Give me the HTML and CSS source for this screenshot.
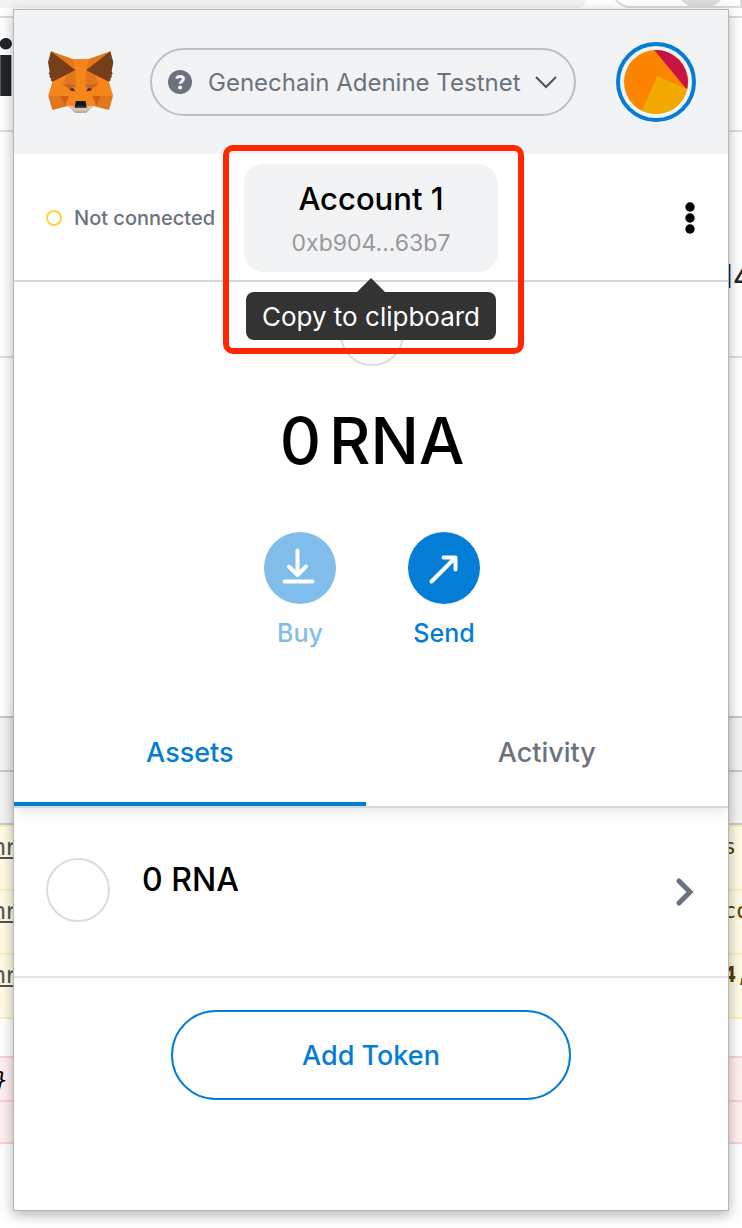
FILE: index.html
```html
<!DOCTYPE html>
<html lang="en">
<head>
<meta charset="utf-8">
<meta name="viewport" content="width=device-width, initial-scale=1">
<title>Wallet</title>
<link rel="stylesheet" href="styles.css">
</head>
<body>
<div class="stage">
  <div class="page" aria-hidden="true">
    <div class="browser-bar"><span class="browser-tab"></span><span class="address"></span></div>
    <div class="page-row page-title"><span class="edge-left">i</span></div>
    <div class="page-row page-card"><span></span><span class="edge-right">l4</span></div>
    <div class="page-space"></div>
    <div class="tool-row"></div>
    <div class="tool-row"></div>
    <div class="page-row warn-row"><span class="edge-left link">nr</span><span class="edge-right">s</span></div>
    <div class="page-row warn-row"><span class="edge-left link">nr</span><span class="edge-right">co</span></div>
    <div class="page-row warn-row"><span class="edge-left link">nr</span><span class="edge-right strong">4,</span></div>
    <div class="page-gap"></div>
    <div class="page-row error-row"><span class="edge-left brace">}</span></div>
    <div class="page-row error-row last"></div>
  </div>

  <main class="popup">
    <header class="header">
      <svg class="fox" viewBox="138 144 204 204" role="img" aria-label="Fox logo">
        <defs>
          <g id="fox-half">
            <path fill="#e2761b" d="M153 154L218 177L242 177L242 303L226 303L224 322L204 318L157 330L145 288L158 245Z"/>
            <path fill="#763e1a" d="M153 154L226 211L158 245L151 240L154 236L148 231L150 226L146 221L149 214L144 187Z"/>
            <path fill="#f6851b" d="M218 177H243V304H226V211Z"/>
            <path fill="#f6851b" d="M158 245L200 224L189 252L205 288H145Z"/>
            <path fill="#e2761b" d="M200 224L226 211L228 256L189 252Z"/>
            <path fill="#cd6116" d="M189 252L228 256L208 269Z"/>
            <path fill="#f6851b" d="M189 252L208 268L230 277L228 256L243 256V304H226L205 288Z"/>
            <path fill="#cd6116" d="M181 288H207L195 317Z"/>
            <path fill="#f6851b" d="M207 288L227 303L224 319L197 317Z"/>
            <path fill="#233447" d="M208 267L219 264L225 274L213 272Z"/>
            <path fill="#d7c1b3" d="M202 317L224 319L225 323H243V339H226Z"/>
            <path fill="#c0ad9e" d="M214 328L226 333H243V339H226Z"/>
            <path fill="#161616" d="M227 303H243V323H224Z"/>
            <path fill="#393939" d="M229 317H243V320H228Z"/>
          </g>
        </defs>
        <use href="#fox-half"/>
        <use href="#fox-half" transform="translate(484 0) scale(-1 1)"/>
      </svg>
      <button class="network" type="button">
        <svg class="network-icon" viewBox="0 0 24 24" aria-hidden="true">
          <circle cx="12" cy="12" r="12" fill="#6a737d"/>
          <path d="M8.600 8.700C9 7.200 10.300 6.500 12.100 6.500c2 0 3.400 1 3.400 2.600 0 2.300-3.300 2.300-3.300 4.700" fill="none" stroke="#f2f3f5" stroke-width="3"/>
          <circle cx="12.100" cy="17.500" r="2" fill="#f2f3f5"/>
        </svg>
        <span class="network-name">Genechain Adenine Testnet</span>
        <svg class="network-caret" viewBox="0 0 22 14" aria-hidden="true"><path d="M1 2L11 12L21 2" fill="none" stroke="#4d5358" stroke-width="2"/></svg>
      </button>
      <button class="avatar" type="button" aria-label="My accounts">
        <svg viewBox="132 150 192 192" aria-hidden="true">
          <path fill="#fb8500" d="M132 150H324V342H132Z"/>
          <path fill="#c81444" d="M221 148L324 273V148Z"/>
          <path fill="#f2aa03" d="M232 228L330 270V345H180Z"/>
        </svg>
      </button>
    </header>

    <section class="menu-bar">
      <div class="status"><span class="status-dot"></span>Not connected</div>
      <div class="account-wrap">
        <button class="account" type="button" aria-describedby="copy-tip">
          <span class="account-name">Account 1</span>
          <span class="account-address">0xb904...63b7</span>
        </button>
        <div class="tooltip" id="copy-tip" role="tooltip">Copy to clipboard</div>
      </div>
      <button class="options" type="button" aria-label="Account options">
        <svg viewBox="0 0 10 32" aria-hidden="true"><circle cx="5" cy="5" r="4.700"/><circle cx="5" cy="16" r="4.700"/><circle cx="5" cy="27" r="4.700"/></svg>
      </button>
    </section>

    <section class="overview">
      <span class="token-icon"></span>
      <div class="balance"><span>0</span><span>RNA</span></div>
      <div class="actions">
        <button class="action" type="button" disabled>
          <span class="action-circle"><svg viewBox="0 0 72 72" aria-hidden="true"><path d="M33.500 18.500V42M25 34.500L33.500 43L42 34.500M20.500 49.500H48.500" /></svg></span>
          Buy
        </button>
        <button class="action" type="button">
          <span class="action-circle"><svg viewBox="0 0 72 72" aria-hidden="true"><path d="M23.500 49.500L47 26M35.500 25.500H47.500V37.500"/></svg></span>
          Send
        </button>
      </div>
    </section>

    <nav class="tabs" role="tablist">
      <button class="tab active" type="button" role="tab" aria-selected="true">Assets</button>
      <button class="tab" type="button" role="tab" aria-selected="false">Activity</button>
    </nav>

    <button class="asset" type="button">
      <span class="token-icon"></span>
      <span class="asset-amount">0 RNA</span>
      <svg class="asset-arrow" viewBox="0 0 18 28" aria-hidden="true"><path d="M3 3L14 14L3 25" fill="none" stroke="#6a737d" stroke-width="5" stroke-linecap="round"/></svg>
    </button>

    <div class="add"><button class="add-token" type="button">Add Token</button></div>
  </main>
</div>
</body>
</html>
```
FILE: styles.css
```css
* {
  box-sizing: border-box;
}

body {
  margin: 0;
  background: #fff;
  color: #000;
  font-family: Inter, "Liberation Sans", sans-serif;
}

button {
  margin: 0;
  padding: 0;
  border: 0;
  background: none;
  color: inherit;
  font: inherit;
}

svg {
  display: block;
}

.stage {
  display: grid;
  min-height: 100vh;
}

.page,
.popup {
  grid-area: 1 / 1;
  min-width: 0;
}

/* Browser page behind the popup */
.page {
  overflow: hidden;
}

.browser-bar {
  display: flex;
  justify-content: space-between;
  height: 18px;
  border-bottom: 2px solid #d8dae0;
  overflow: hidden;
}

.browser-tab {
  width: 79%;
  height: 8px;
  border-radius: 0 0 12px 0;
  background: #f1f2f4;
}

.address {
  width: 130px;
  height: 36px;
  margin-top: -28px;
  border: 2px solid #dcdde0;
  border-radius: 18px 0 0 18px;
  background: radial-gradient(circle at 87px 6px, #dcdcdd 28px, #fff 29px);
}

.page-row {
  display: flex;
  justify-content: space-between;
}

.edge-left,
.edge-right {
  display: flex;
  width: 16px;
  white-space: nowrap;
}

.edge-left {
  justify-content: flex-end;
}

.edge-right {
  width: 19px;
}

.page-title {
  height: 114px;
  border-bottom: 2px solid #dcdee0;
  color: #212529;
  font-size: 76px;
  font-weight: 700;
  line-height: 100px;
}

.page-card {
  align-items: center;
  height: 226px;
  padding-top: 64px;
  border-bottom: 2px solid #dcdee0;
  color: #212529;
  font-size: 32px;
}

.page-card .edge-right {
  width: 17px;
}

.page-space {
  height: 358px;
}

.tool-row {
  height: 54px;
  border-top: 2px solid #cacaca;
  background: #f3f3f3;
}

.tool-row + .tool-row {
  height: 55px;
  border-bottom: 2px solid #cacaca;
}

.warn-row {
  height: 64px;
  border-top: 2px solid #fff0b5;
  background: #fffae4;
  color: #5c3c00;
  font-family: "DejaVu Sans Mono", monospace;
  font-size: 22px;
  line-height: 40px;
}

.link {
  color: #545454;
  font-family: "Noto Sans", sans-serif;
  font-size: 24px;
  line-height: 38px;
  text-decoration: underline;
}

.strong {
  font-weight: 700;
}

.page-gap {
  height: 39px;
  border-top: 2px solid #fff0b5;
}

.error-row {
  height: 44px;
  border-top: 2px solid #fdcfd0;
  background: #ffefef;
}

.error-row.last {
  border-bottom: 2px solid #fdcfd0;
}

.brace {
  padding-right: 8px;
  font-family: "DejaVu Sans Mono", monospace;
  font-size: 22px;
  font-style: italic;
  line-height: 44px;
}

/* Popup */
.popup {
  position: relative;
  display: flex;
  flex-direction: column;
  margin: 9px 13px 17px;
  border: 1px solid #b4b6b8;
  background: #fff;
  box-shadow: 0 4px 12px rgba(0, 0, 0, 0.3);
}

.header {
  display: flex;
  align-items: center;
  height: 144px;
  padding: 0 32px;
  background: #f2f3f5;
}

.fox {
  flex: none;
  width: 68px;
  height: 68px;
}

.network {
  display: flex;
  flex: 1;
  align-items: center;
  min-width: 0;
  height: 68px;
  margin: 0 40px 0 36px;
  padding: 0 18px 0 16px;
  border: 2px solid #bbc0c5;
  border-radius: 34px;
  color: #6a737d;
  font-size: 24px;
}

.network-icon {
  flex: none;
  width: 24px;
  height: 24px;
}

.network-name {
  flex: 1;
  margin: 0 14px 0 16px;
  text-align: left;
  white-space: nowrap;
}

.network-caret {
  flex: none;
  width: 22px;
  height: 14px;
}

.avatar {
  flex: none;
  width: 80px;
  height: 80px;
  padding: 4px;
  border: 4px solid #037dd6;
  border-radius: 50%;
}

.avatar svg {
  width: 64px;
  height: 64px;
  border-radius: 50%;
}

.menu-bar {
  display: grid;
  grid-template-columns: 1fr 254px 1fr;
  align-items: center;
  height: 128px;
  padding: 2px 32px 0;
  border-bottom: 2px solid #d2d8dd;
}

.status {
  display: flex;
  align-items: center;
  gap: 12px;
  color: #6a737d;
  font-size: 20px;
  font-weight: 500;
  white-space: nowrap;
}

.status-dot {
  width: 16px;
  height: 16px;
  border: 2px solid #ffd33d;
  border-radius: 50%;
}

.account-wrap {
  position: relative;
}

/* Red highlight around the account and its tooltip */
.account-wrap::after {
  content: "";
  position: absolute;
  inset: -19px -26px -82px -21px;
  border: 6px solid #ff2600;
  border-radius: 10px;
  pointer-events: none;
}

.account {
  display: flex;
  flex-direction: column;
  align-items: center;
  justify-content: center;
  gap: 10px;
  width: 100%;
  height: 108px;
  padding-top: 4px;
  border-radius: 20px;
  background: #f2f3f5;
}

.account-name {
  font-size: 31px;
  font-weight: 500;
  line-height: 36px;
}

.account-address {
  color: #989a9b;
  font-size: 23px;
  line-height: 32px;
}

.tooltip {
  position: absolute;
  top: 128px;
  left: 2px;
  right: 2px;
  z-index: 1;
  padding-top: 2px;
  border-radius: 8px;
  background: #333;
  color: #fff;
  font-size: 26px;
  line-height: 46px;
  text-align: center;
  white-space: nowrap;
}

.tooltip::before {
  content: "";
  position: absolute;
  bottom: 100%;
  left: 50%;
  margin-left: -14px;
  border: 14px solid transparent;
  border-top: 0;
  border-bottom-color: #333;
}

.options {
  justify-self: end;
  padding: 0 1px;
}

.options svg {
  width: 10px;
  height: 32px;
}

.token-icon {
  flex: none;
  width: 64px;
  height: 64px;
  border: 2px solid #dcdcdc;
  border-radius: 50%;
}

.overview {
  display: flex;
  flex-direction: column;
  align-items: center;
  padding: 20px 0 0 2px;
}

.balance {
  display: flex;
  gap: 8px;
  margin-top: 35px;
  font-size: 64px;
  font-weight: 500;
  line-height: 80px;
}

.actions {
  display: flex;
  gap: 72px;
  margin-top: 51px;
}

.action {
  display: flex;
  flex-direction: column;
  align-items: center;
  gap: 14px;
  width: 72px;
  color: #037dd6;
  font-size: 25px;
  font-weight: 500;
  line-height: 30px;
}

.action:disabled {
  opacity: 0.5;
}

.action-circle {
  width: 72px;
  height: 72px;
  border-radius: 50%;
  background: #037dd6;
}

.action-circle path {
  fill: none;
  stroke: #fff;
  stroke-width: 4;
  stroke-linecap: round;
  stroke-linejoin: round;
}

.tabs {
  display: flex;
  height: 108px;
  margin-top: 52px;
  border-bottom: 2px solid #d6d9dc;
  box-shadow: 0 6px 12px -2px rgba(0, 0, 0, 0.1);
}

.tab {
  flex: 1 1 auto;
  padding: 3px 0 0;
  border-bottom: 4px solid transparent;
  color: #6a737d;
  font-size: 27px;
  font-weight: 500;
}

.tab.active {
  border-bottom-color: #037dd6;
  color: #037dd6;
}

.asset {
  display: flex;
  align-items: center;
  height: 170px;
  padding: 0 34px 4px 32px;
  border-bottom: 2px solid #e3e5e7;
}

.asset-amount {
  flex: 1;
  margin: 0 32px 22px;
  font-size: 32px;
  font-weight: 500;
  text-align: left;
}

.asset-arrow {
  width: 18px;
  height: 28px;
  margin-top: 4px;
}

.add {
  display: flex;
  justify-content: center;
  padding: 32px;
}

.add-token {
  width: 400px;
  height: 90px;
  border: 2px solid #037dd6;
  border-radius: 45px;
  color: #037dd6;
  font-size: 27px;
  font-weight: 500;
}
```
